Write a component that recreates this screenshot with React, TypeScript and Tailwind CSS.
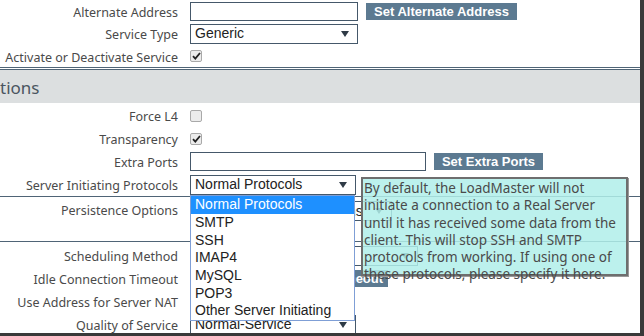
import React from "react";

const labelFont = "font-['Noto_Sans',sans-serif]";
const ctrlFont = "font-['Liberation_Sans',Arial,sans-serif]";

const Arrow = () => (
  <svg width="8" height="6" viewBox="0 0 8 6" className="shrink-0">
    <path d="M0 0h8L4 6z" fill="#2f3b46" />
  </svg>
);

const Check = ({ checked }: { checked: boolean }) => (
  <span className="flex h-3 w-3 items-center justify-center rounded-[2px] border border-[#a9a9a9] bg-[#ececec]">
    {checked && (
      <svg width="9" height="8" viewBox="0 0 9 8">
        <path d="M1 4.2l2.3 2.4L8 1" stroke="#222" strokeWidth="1.8" fill="none" />
      </svg>
    )}
  </span>
);

const Row = ({
  label,
  h,
  children,
}: {
  label: string;
  h: string;
  children?: React.ReactNode;
}) => (
  <div className={`grid grid-cols-[190px_1fr] items-center ${h}`}>
    <div className={`pr-3 pt-[4px] text-right text-[12.5px] text-[#4a4a4a] ${labelFont}`}>{label}</div>
    <div className="flex items-center gap-2">{children}</div>
  </div>
);

const Button = ({ children, w }: { children: string; w: string }) => (
  <div
    className={`flex h-[17px] items-center justify-center bg-[#5c7a91] text-[13px] font-bold text-white ${ctrlFont} ${w}`}
  >
    {children}
  </div>
);

const SelectBox = ({ text, w, cls = "" }: { text: string; w: string; cls?: string }) => (
  <div
    className={`flex h-[20px] items-center justify-between overflow-hidden whitespace-nowrap border border-[#45586a] bg-white pl-1 pr-2 text-[14px] text-[#222] ${ctrlFont} ${w} ${cls}`}
  >
    <span>{text}</span>
    <Arrow />
  </div>
);

const Input = ({ w }: { w: string }) => (
  <div className={`h-[19px] border border-[#45586a] bg-white ${w}`} />
);

const options = ["Normal Protocols", "SMTP", "SSH", "IMAP4", "MySQL", "POP3", "Other Server Initiating"];

export default function App() {
  return (
    <div className="relative h-[336px] w-[644px] overflow-hidden border-b-[3px] border-r-[4px] border-[#3a3a3a] bg-white">
      <Row label="Alternate Address" h="h-[22px]">
        <Input w="w-[168px]" />
        <Button w="w-[151px]">Set Alternate Address</Button>
      </Row>
      <Row label="Service Type" h="h-[23px]">
        <SelectBox text="Generic" w="w-[168px]" />
      </Row>
      <Row label="Activate or Deactivate Service" h="h-[22px]">
        <Check checked />
      </Row>

      <div className="border-t-[3px] border-double border-[#4f6476]">
        <div className={`flex h-[33px] items-center bg-[#dcdfe0] pt-[2px] text-[17px] text-[#4a5560] ${labelFont}`}>
          tions
        </div>
      </div>

      <div className="pt-[1px]">
        <Row label="Force L4" h="h-[23px]">
          <Check checked={false} />
        </Row>
        <Row label="Transparency" h="h-[23px]">
          <Check checked />
        </Row>
        <Row label="Extra Ports" h="h-[23px]">
          <Input w="w-[236px]" />
          <Button w="w-[109px]">Set Extra Ports</Button>
        </Row>
        <Row label="Server Initiating Protocols" h="h-[23px]">
          <SelectBox text="Normal Protocols" w="w-[166px]" cls="border-[#5b8fd0]" />
        </Row>
      </div>

      <div className="h-[46px] border-y border-[#4f6476]">
        <div className="grid grid-cols-[190px_1fr] pt-[4px]">
          <div className={`pr-3 pt-[1px] text-right text-[12.5px] text-[#4a4a4a] ${labelFont}`}>Persistence Options</div>
          <SelectBox text="Source IP Address Options" w="w-[202px]" cls="h-[17px]" />
        </div>
      </div>

      <div className="pt-[2px]">
        <Row label="Scheduling Method" h="h-[23px]">
          <SelectBox text="round robin" w="w-[228px]" cls="h-[19px]" />
        </Row>
        <Row label="Idle Connection Timeout" h="h-[23px]">
          <Input w="w-[80px]" />
          <Button w="w-[110px]">Set Idle Timeout</Button>
        </Row>
        <Row label="Use Address for Server NAT" h="h-[23px]">
          <Check checked={false} />
        </Row>
        <Row label="Quality of Service" h="h-[23px]">
          <SelectBox text="Normal-Service" w="w-[166px]" />
        </Row>
      </div>

      {/* open dropdown list */}
      <div
        className={`absolute left-[190px] top-[195px] w-[165px] border border-[#7f9fd6] bg-white text-[14px] text-[#222] ${ctrlFont}`}
      >
        {options.map((o, i) => (
          <div
            key={o}
            className={`flex h-[17.7px] items-center pl-1 ${i === 0 ? "bg-[#1e90ff] text-white" : ""}`}
          >
            {o}
          </div>
        ))}
      </div>

      {/* tooltip */}
      <div
        className={`absolute left-[361px] top-[177px] h-[99px] w-[267px] border-2 border-[#6e6e6e] bg-[rgba(176,238,234,0.85)] pl-[1px] pt-[1px] text-[13.5px] leading-[17.3px] text-[#4a4a4a] shadow-[1px_1px_0_#999] ${labelFont}`}
      >
        By default, the LoadMaster will not initiate a connection to a Real Server until it has received some data from the client. This will stop SSH and SMTP protocols from working. If using one of these protocols, please specify it here.
      </div>
    </div>
  );
}
